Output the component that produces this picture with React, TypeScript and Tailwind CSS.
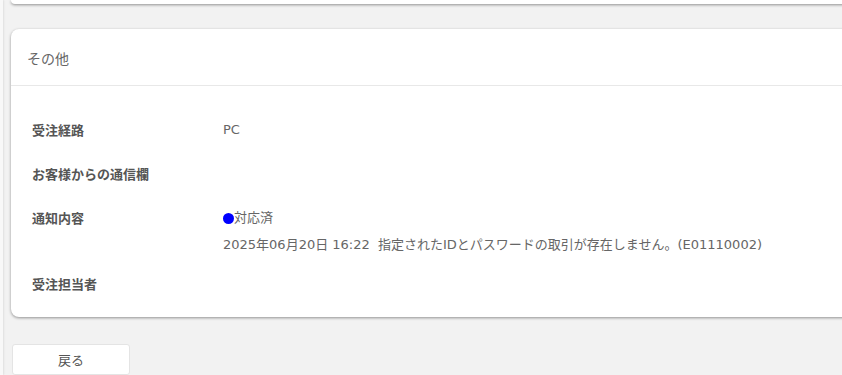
export default function App() {
  const rows = [
    { label: "受注経路", lines: ["PC"] },
    { label: "お客様からの通信欄", lines: [] },
  ];

  return (
    <div
      className="flex w-[842px] h-[375px] overflow-hidden bg-[#f2f2f2] text-[13px] text-[#666]"
      style={{ fontFamily: '"Noto Sans CJK JP", "Noto Sans", sans-serif' }}
    >
      {/* sidebar edge */}
      <div className="w-[3px] shrink-0 bg-[#f8f8f8] shadow-[1px_0_2px_rgba(0,0,0,0.08)]" />

      <div className="flex flex-col ml-[8px] w-[900px] shrink-0">
        {/* previous card (cut off at top) */}
        <div className="h-[5px] bg-white rounded-b-[8px] shadow-[0_1px_3px_rgba(0,0,0,0.4)]" />

        {/* その他 card */}
        <div className="mt-[25px] bg-white rounded-[8px] shadow-[0_1px_3px_rgba(0,0,0,0.4)]">
          <div className="h-[57px] flex items-center px-[16px] border-b border-[#e8e8e8] text-[14px] text-[#666]">
            <span className="pt-[2px]">その他</span>
          </div>
          <div className="pt-[22px] pb-[23px] px-[21px]">
            {rows.map((r) => (
              <div key={r.label} className="flex py-[12px] leading-[20px]">
                <div className="w-[191px] shrink-0 font-bold text-[#555]">{r.label}</div>
                <div className="font-['DejaVu_Sans','Noto_Sans_CJK_JP',sans-serif] text-[13px]">
                  {r.lines.map((l) => <div key={l}>{l}</div>)}
                </div>
              </div>
            ))}
            <div className="flex pt-[12px] leading-[20px]">
              <div className="w-[191px] shrink-0 font-bold text-[#555]">通知内容</div>
              <div className="font-['DejaVu_Sans','Noto_Sans_CJK_JP',sans-serif] text-[13px]">
                <div className="flex items-center">
                  <span className="w-[11px] h-[11px] rounded-full bg-[#0000ff]" />
                  <span>対応済</span>
                </div>
                <div className="mt-[7px] whitespace-pre">2025年06月20日 16:22  指定されたIDとパスワードの取引が存在しません。(E01110002)</div>
              </div>
            </div>
            <div className="flex pt-[19px] leading-[20px]">
              <div className="w-[191px] shrink-0 font-bold text-[#555]">受注担当者</div>
            </div>
          </div>
        </div>

        {/* back button */}
        <button className="mt-[27px] ml-px w-[118px] h-[36px] bg-white border border-[#e4e4e4] rounded-[3px] text-[13px] text-[#555] text-center pt-[1px]">
          戻る
        </button>
      </div>
    </div>
  );
}
